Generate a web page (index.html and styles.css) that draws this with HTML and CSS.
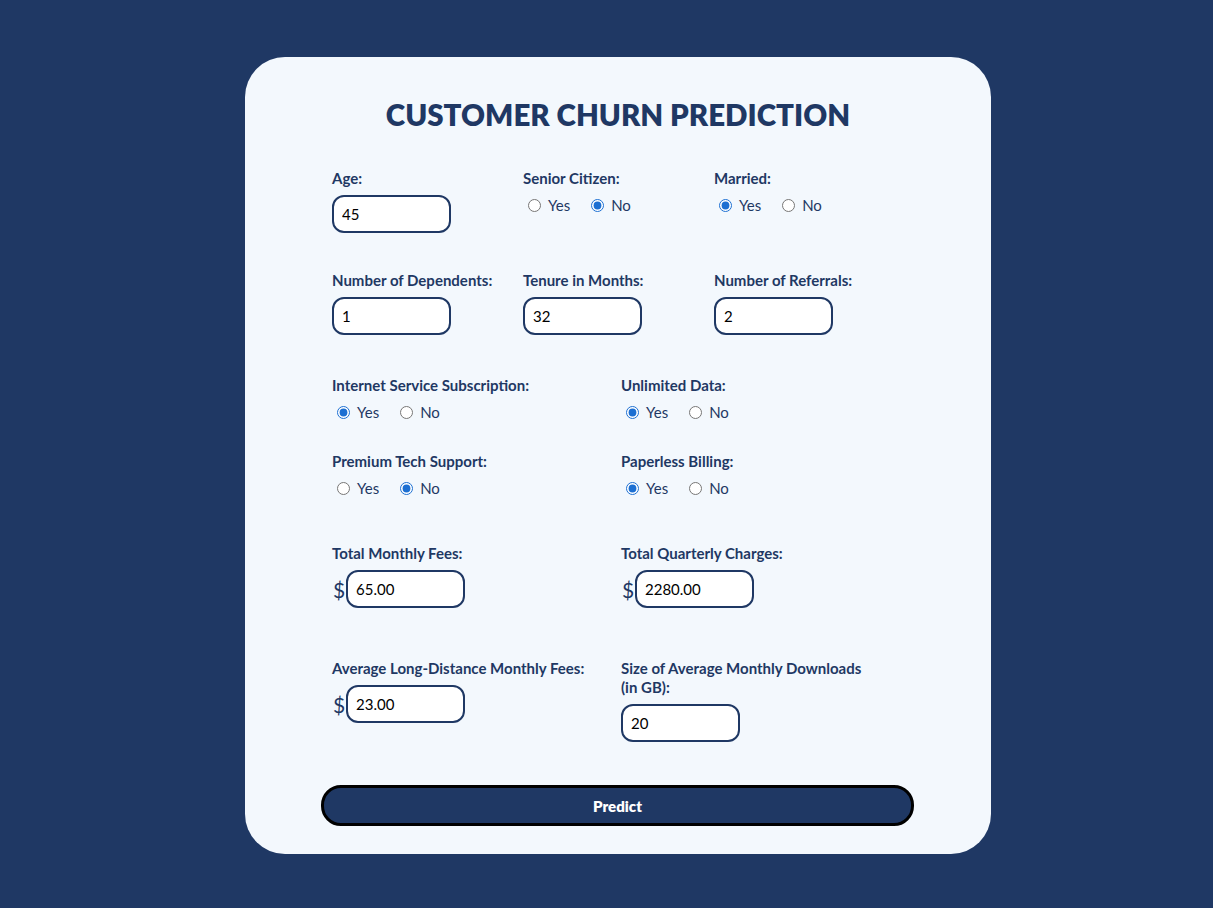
FILE: index.html
```html
<!DOCTYPE html>
<html lang="en">
<head>
<meta charset="utf-8">
<title>Customer Churn Prediction</title>
<link rel="stylesheet" href="styles.css">
</head>
<body>
<div class="card">
  <h1 class="title">CUSTOMER CHURN PREDICTION</h1>
  <form class="form">
    <div class="row three r1">
      <div class="field">
        <label class="lbl">Age:</label>
        <input class="inp" type="text" value="45">
      </div>
      <div class="field">
        <label class="lbl">Senior Citizen:</label>
        <div class="radios">
          <label class="opt"><input type="radio" name="senior"><span>Yes</span></label>
          <label class="opt"><input type="radio" name="senior" checked><span>No</span></label>
        </div>
      </div>
      <div class="field">
        <label class="lbl">Married:</label>
        <div class="radios">
          <label class="opt"><input type="radio" name="married" checked><span>Yes</span></label>
          <label class="opt"><input type="radio" name="married"><span>No</span></label>
        </div>
      </div>
    </div>

    <div class="row three r2">
      <div class="field">
        <label class="lbl">Number of Dependents:</label>
        <input class="inp" type="text" value="1">
      </div>
      <div class="field">
        <label class="lbl">Tenure in Months:</label>
        <input class="inp" type="text" value="32">
      </div>
      <div class="field">
        <label class="lbl">Number of Referrals:</label>
        <input class="inp" type="text" value="2">
      </div>
    </div>

    <div class="row two r3">
      <div class="field">
        <label class="lbl">Internet Service Subscription:</label>
        <div class="radios">
          <label class="opt"><input type="radio" name="internet" checked><span>Yes</span></label>
          <label class="opt"><input type="radio" name="internet"><span>No</span></label>
        </div>
      </div>
      <div class="field">
        <label class="lbl">Unlimited Data:</label>
        <div class="radios">
          <label class="opt"><input type="radio" name="unlimited" checked><span>Yes</span></label>
          <label class="opt"><input type="radio" name="unlimited"><span>No</span></label>
        </div>
      </div>
    </div>

    <div class="row two r4">
      <div class="field">
        <label class="lbl">Premium Tech Support:</label>
        <div class="radios">
          <label class="opt"><input type="radio" name="tech"><span>Yes</span></label>
          <label class="opt"><input type="radio" name="tech" checked><span>No</span></label>
        </div>
      </div>
      <div class="field">
        <label class="lbl">Paperless Billing:</label>
        <div class="radios">
          <label class="opt"><input type="radio" name="paperless" checked><span>Yes</span></label>
          <label class="opt"><input type="radio" name="paperless"><span>No</span></label>
        </div>
      </div>
    </div>

    <div class="row two r5">
      <div class="field">
        <label class="lbl">Total Monthly Fees:</label>
        <div class="money"><span class="dollar">$</span><input class="inp" type="text" value="65.00"></div>
      </div>
      <div class="field">
        <label class="lbl">Total Quarterly Charges:</label>
        <div class="money"><span class="dollar">$</span><input class="inp" type="text" value="2280.00"></div>
      </div>
    </div>

    <div class="row two r6">
      <div class="field">
        <label class="lbl">Average Long-Distance Monthly Fees:</label>
        <div class="money"><span class="dollar">$</span><input class="inp" type="text" value="23.00"></div>
      </div>
      <div class="field">
        <label class="lbl narrow">Size of Average Monthly Downloads (in GB):</label>
        <input class="inp" type="text" value="20">
      </div>
    </div>

    <button class="btn" type="button">Predict</button>
  </form>
</div>
</body>
</html>
```

FILE: styles.css
```css
* { box-sizing: border-box; }

body {
  margin: 0;
  background: #1f3864;
  font-family: "Lato", "Noto Sans", sans-serif;
  color: #1f3864;
}

.card {
  width: 746px;
  height: 797px;
  margin: 57px 0 0 245px;
  background: #f3f8fd;
  border-radius: 40px;
  padding-top: 40px;
}

.title {
  margin: 0;
  text-align: center;
  font-size: 29.5px;
  line-height: 36px;
  font-weight: 800;
  color: #1f3864;
}

.form {
  width: 593px;
  margin-left: 76px;
}

.row {
  display: grid;
  padding-left: 11px;
}

.three { grid-template-columns: 191px 191px 191px; }
.two { grid-template-columns: 289px 289px; }

.r1 { margin-top: 37px; }
.r2 { margin-top: 39px; }
.r3 { margin-top: 42px; }
.r4 { margin-top: 31px; }
.r5 { margin-top: 47px; }
.r6 { margin-top: 52px; }

.field {
  display: flex;
  flex-direction: column;
  align-items: flex-start;
}

.lbl {
  font-size: 15px;
  line-height: 17px;
  font-weight: 700;
  color: #1f3864;
  margin-bottom: 8px;
}

.lbl.narrow { width: 248px; line-height: 19px; margin-top: -1px; margin-bottom: 7px; }

.inp {
  width: 119px;
  height: 38px;
  border: 2px solid #1f3864;
  border-radius: 12px;
  background: #fff;
  padding: 0 8px;
  font-family: inherit;
  font-size: 15px;
  color: #000;
  outline: none;
}

.radios {
  display: flex;
  align-items: center;
  height: 20px;
  margin-top: 0;
}

.opt {
  display: flex;
  align-items: center;
  font-size: 15px;
  color: #1f3864;
  margin-right: 16px;
}

.opt input {
  margin: 0 3px 0 5px;
  width: 13px;
  height: 13px;
  accent-color: #1c6fd2;
}

.opt span { padding-left: 4px; }

.money {
  display: flex;
  align-items: center;
}

.dollar {
  font-size: 21px;
  width: 14px;
  padding-left: 1px;
  color: #1f3864;
}

.btn {
  display: block;
  width: 593px;
  height: 41px;
  margin-top: 43px;
  border: 3px solid #000;
  border-radius: 20px;
  background: #1f3864;
  color: #fff;
  font-family: inherit;
  font-size: 15px;
  font-weight: 800;
}
```
